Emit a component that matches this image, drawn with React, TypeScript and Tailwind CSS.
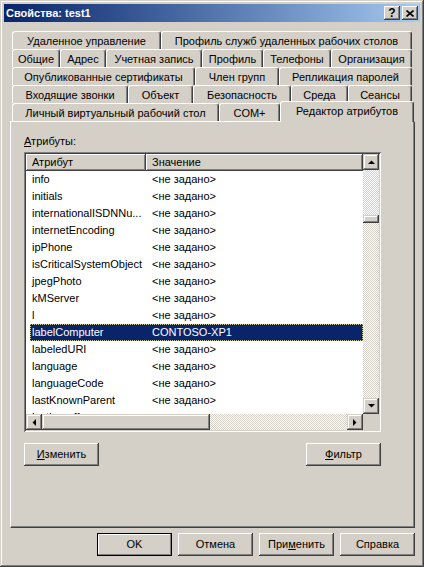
import type { ReactNode } from 'react'

// classic 3D edges
const RAISED =
  'shadow-[inset_-1px_-1px_#404040,inset_1px_1px_#d4d0c8,inset_-2px_-2px_#808080,inset_2px_2px_#ffffff]'
const BUTTON =
  'shadow-[inset_-1px_-1px_#404040,inset_1px_1px_#ffffff,inset_-2px_-2px_#808080,inset_2px_2px_#d4d0c8]'
const CHECKER = 'bg-[image:repeating-conic-gradient(#ffffff_0_25%,#d4d0c8_0_50%)] bg-[length:2px_2px]'

type TabDef = { label: string; w: string }

const TAB_ROWS: TabDef[][] = [
  [
    { label: 'Удаленное управление', w: 'w-[149px]' },
    { label: 'Профиль служб удаленных рабочих столов', w: 'w-[251px]' },
  ],
  [
    { label: 'Общие', w: 'w-[48px]' },
    { label: 'Адрес', w: 'w-[46px]' },
    { label: 'Учетная запись', w: 'w-[96px]' },
    { label: 'Профиль', w: 'w-[61px]' },
    { label: 'Телефоны', w: 'w-[68px]' },
    { label: 'Организация', w: 'w-[81px]' },
  ],
  [
    { label: 'Опубликованные сертификаты', w: 'w-[183px]' },
    { label: 'Член групп', w: 'w-[84px]' },
    { label: 'Репликация паролей', w: 'w-[133px]' },
  ],
  [
    { label: 'Входящие звонки', w: 'w-[116px]' },
    { label: 'Объект', w: 'w-[65px]' },
    { label: 'Безопасность', w: 'w-[98px]' },
    { label: 'Среда', w: 'w-[57px]' },
    { label: 'Сеансы', w: 'w-[64px]' },
  ],
]

const NOT_SET = '<не задано>'
const ROWS: { name: string; value: string; selected?: boolean }[] = [
  { name: 'info', value: NOT_SET },
  { name: 'initials', value: NOT_SET },
  { name: 'internationalISDNNu...', value: NOT_SET },
  { name: 'internetEncoding', value: NOT_SET },
  { name: 'ipPhone', value: NOT_SET },
  { name: 'isCriticalSystemObject', value: NOT_SET },
  { name: 'jpegPhoto', value: NOT_SET },
  { name: 'kMServer', value: NOT_SET },
  { name: 'l', value: NOT_SET },
  { name: 'labelComputer', value: 'CONTOSO-XP1', selected: true },
  { name: 'labeledURI', value: NOT_SET },
  { name: 'language', value: NOT_SET },
  { name: 'languageCode', value: NOT_SET },
  { name: 'lastKnownParent', value: NOT_SET },
  { name: 'lastLogoff', value: NOT_SET },
]

function Tab({ label, w }: TabDef) {
  return (
    <div
      className={`${w} h-[18px] flex items-center justify-center whitespace-nowrap border-l border-t border-white border-r border-r-[#404040] rounded-t-[3px] shadow-[inset_-1px_0_#808080] pt-[1px]`}
    >
      {label}
    </div>
  )
}

function Btn({ children, isDefault }: { children: ReactNode; isDefault?: boolean }) {
  return (
    <button
      className={`w-[75px] h-[23px] flex items-center justify-center bg-[#d4d0c8] font-normal text-[11px] ${
        isDefault
          ? 'border border-black shadow-[inset_-1px_-1px_#808080,inset_1px_1px_#ffffff]'
          : BUTTON
      }`}
    >
      {children}
    </button>
  )
}

function Arrow({ dir }: { dir: 'up' | 'down' | 'left' | 'right' }) {
  const pts = {
    up: '0,4 7,4 3.5,0.5',
    down: '0,0 7,0 3.5,3.5',
    left: '4,0 4,7 0.5,3.5',
    right: '0,0 0,7 3.5,3.5',
  }[dir]
  const vertical = dir === 'up' || dir === 'down'
  return (
    <svg width={vertical ? 7 : 4} height={vertical ? 4 : 7} aria-hidden>
      <polygon points={pts} fill="#000" />
    </svg>
  )
}

function ScrollBtn({ dir }: { dir: 'up' | 'down' | 'left' | 'right' }) {
  return (
    <div className={`w-[16px] h-[16px] shrink-0 flex items-center justify-center bg-[#d4d0c8] ${RAISED}`}>
      <Arrow dir={dir} />
    </div>
  )
}

export default function App() {
  return (
    <div className="w-[424px] h-[567px] bg-[#d4d0c8] p-[4px] flex flex-col font-['Liberation_Sans',Arial,sans-serif] text-[11px] leading-[13px] text-black select-none shadow-[inset_-1px_-1px_#404040,inset_1px_1px_#d4d0c8,inset_-2px_-2px_#808080,inset_2px_2px_#ffffff]">
      {/* title bar */}
      <div className="h-[18px] flex items-center bg-linear-to-r from-[#0a246a] to-[#a6caf0] pl-[2px] pr-[2px]">
        <span className="font-bold text-white">Свойства: test1</span>
        <div className="ml-auto flex gap-[2px]">
          <div className={`w-[16px] h-[14px] flex items-center justify-center bg-[#d4d0c8] font-bold text-[12px] ${BUTTON}`}>
            ?
          </div>
          <div className={`w-[16px] h-[14px] flex items-center justify-center bg-[#d4d0c8] ${BUTTON}`}>
            <svg width="8" height="7" viewBox="0 0 8 7" aria-hidden>
              <path d="M0.5 0.5L7.5 6.5M7.5 0.5L0.5 6.5" stroke="#000" strokeWidth="1.6" />
            </svg>
          </div>
        </div>
      </div>

      {/* tab rows */}
      <div className="mt-[9px] ml-[8px] flex flex-col">
        {TAB_ROWS.map((row, i) => (
          <div key={i} className="flex">
            {row.map((t) => (
              <Tab key={t.label} {...t} />
            ))}
          </div>
        ))}
        <div className="flex items-start">
          <Tab label="Личный виртуальный рабочий стол" w="w-[207px]" />
          <Tab label="COM+" w="w-[61px]" />
          <div className="relative z-10 w-[134px] h-[21px] -mt-[2px] -mb-[1px] flex justify-center whitespace-nowrap bg-[#d4d0c8] border-l border-t border-white border-r border-r-[#404040] rounded-t-[3px] shadow-[inset_-1px_0_#808080] pt-[3px]">
            Редактор атрибутов
          </div>
        </div>
      </div>

      {/* tab page */}
      <div className="ml-[6px] w-[405px] h-[407px] border-l border-t border-white border-r border-b border-r-[#404040] border-b-[#404040] shadow-[inset_-1px_-1px_#808080] pl-[13px] flex flex-col">
        <div className="mt-[13px]">
          <span className="underline">А</span>трибуты:
        </div>

        {/* list view */}
        <div className="mt-[4px] w-[357px] h-[280px] p-[2px] bg-white shadow-[inset_1px_1px_#808080,inset_-1px_-1px_#ffffff,inset_2px_2px_#404040,inset_-2px_-2px_#d4d0c8]">
          <div className="grid grid-cols-[337px_16px] grid-rows-[260px_16px] h-full">
            <div className="flex flex-col overflow-hidden bg-white">
              <div className="h-[17px] shrink-0 flex">
                <div className={`w-[120px] flex items-center pl-[6px] bg-[#d4d0c8] ${BUTTON}`}>Атрибут</div>
                <div className={`flex-1 flex items-center pl-[6px] bg-[#d4d0c8] ${BUTTON}`}>Значение</div>
              </div>
              {ROWS.map((r) => (
                <div
                  key={r.name}
                  className={`h-[17px] shrink-0 ml-[4px] flex items-center whitespace-nowrap ${
                    r.selected
                      ? 'bg-[#0a246a] text-white outline-1 outline-dotted outline-[#c8c8a0] -outline-offset-1'
                      : ''
                  }`}
                >
                  <div className="w-[122px] pl-[2px]">{r.name}</div>
                  <div className="flex-1">{r.value}</div>
                </div>
              ))}
            </div>

            {/* vertical scrollbar */}
            <div className="flex flex-col">
              <ScrollBtn dir="up" />
              <div className={`h-[45px] ${CHECKER}`} />
              <div className={`h-[8px] bg-[#d4d0c8] ${RAISED}`} />
              <div className={`flex-1 ${CHECKER}`} />
              <ScrollBtn dir="down" />
            </div>

            {/* horizontal scrollbar */}
            <div className="flex">
              <ScrollBtn dir="left" />
              <div className={`w-[168px] bg-[#d4d0c8] ${RAISED}`} />
              <div className={`flex-1 ${CHECKER}`} />
              <ScrollBtn dir="right" />
            </div>
            <div className="bg-[#d4d0c8]" />
          </div>
        </div>

        <div className="mt-[11px] w-[357px] flex justify-between">
          <Btn>
            <span className="underline">И</span>зменить
          </Btn>
          <Btn>
            <span className="underline">Ф</span>ильтр
          </Btn>
        </div>
      </div>

      {/* dialog buttons */}
      <div className="mt-[5px] mr-[5px] flex justify-end gap-[6px]">
        <Btn isDefault>OK</Btn>
        <Btn>Отмена</Btn>
        <Btn>
          При<span className="underline">м</span>енить
        </Btn>
        <Btn>Справка</Btn>
      </div>
    </div>
  )
}
